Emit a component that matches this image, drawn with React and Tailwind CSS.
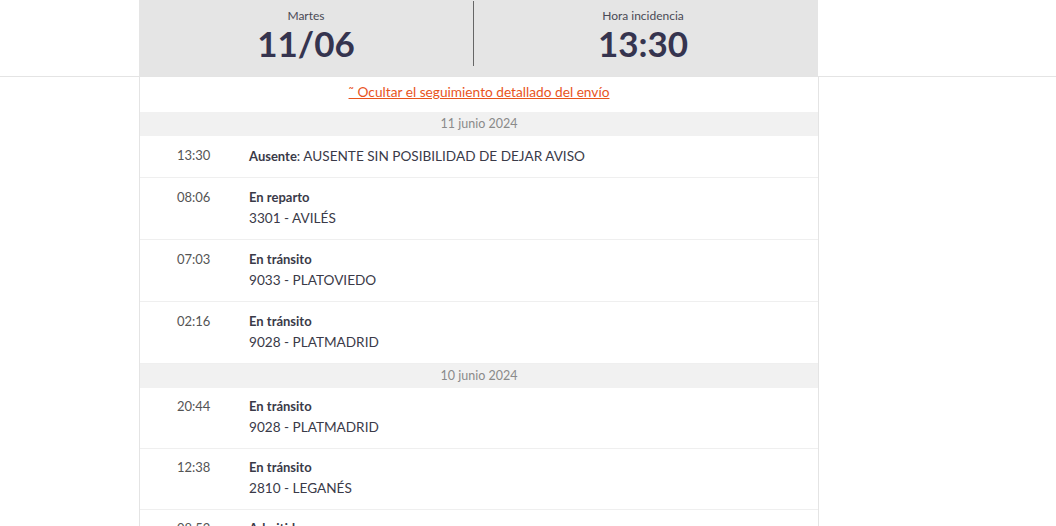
import React from 'react';

const days = [
  {
    date: '11 junio 2024',
    compact: false,
    events: [
      { time: '13:30', title: 'Ausente', detail: 'AUSENTE SIN POSIBILIDAD DE DEJAR AVISO', inline: true },
      { time: '08:06', title: 'En reparto', detail: '3301 - AVILÉS' },
      { time: '07:03', title: 'En tránsito', detail: '9033 - PLATOVIEDO' },
      { time: '02:16', title: 'En tránsito', detail: '9028 - PLATMADRID' },
    ],
  },
  {
    date: '10 junio 2024',
    compact: true,
    events: [
      { time: '20:44', title: 'En tránsito', detail: '9028 - PLATMADRID' },
      { time: '12:38', title: 'En tránsito', detail: '2810 - LEGANÉS' },
      { time: '08:52', title: 'Admitido', detail: '2810 - LEGANÉS' },
    ],
  },
];

function EventRow({ ev, compact }) {
  if (ev.inline) {
    return (
      <div className="flex h-[42px] items-center border-b border-[#efefef] pb-[1px] text-[13.6px] text-[#3a3a48]">
        <div className="w-[109px] pl-[37px] text-[13px] text-[#555]">{ev.time}</div>
        <div>
          <span className="text-[13px] font-bold">{ev.title}</span>: {ev.detail}
        </div>
      </div>
    );
  }
  return (
    <div
      className={
        compact
          ? 'flex h-[61px] border-b border-[#efefef] pt-[9px] text-[13.6px] text-[#3a3a48]'
          : 'flex h-[62px] border-b border-[#efefef] pt-[10px] text-[13.6px] text-[#3a3a48]'
      }
    >
      <div className="w-[109px] pl-[37px] text-[13px] leading-[18px] text-[#555]">{ev.time}</div>
      <div className="flex flex-col gap-[3px] leading-[18px]">
        <span className="text-[13px] font-bold">{ev.title}</span>
        <span>{ev.detail}</span>
      </div>
    </div>
  );
}

export default function App() {
  return (
    <div className="h-[526px] overflow-hidden bg-white" style={{ fontFamily: 'Lato, "Open Sans", sans-serif' }}>
      <div className="border-b border-[#e4e4e4]">
        <div className="ml-[139px] flex h-[76px] w-[679px] bg-[#e5e5e5]">
          <div className="flex w-[334px] flex-col items-center pt-[7px]">
            <span className="text-[12px] leading-[18px] text-[#4a4a55]">Martes</span>
            <span className="text-[35px] font-bold leading-[36px] text-[#35344f]">11/06</span>
          </div>
          <div className="mt-[1px] h-[65px] w-px bg-[#666]" />
          <div className="flex flex-1 flex-col items-center pt-[7px] pr-[6px]">
            <span className="text-[12px] leading-[18px] text-[#4a4a55]">Hora incidencia</span>
            <span className="text-[35px] font-bold leading-[36px] text-[#35344f]">13:30</span>
          </div>
        </div>
      </div>
      <div className="ml-[139px] w-[680px] border-x border-[#e4e4e4]">
        <div className="flex h-[35px] justify-center pt-[6px]">
          <a href="#" className="text-[13.7px] leading-[18px] text-[#e8541c] underline">
            ˜ Ocultar el seguimiento detallado del envío
          </a>
        </div>
        {days.map((d) => (
          <div key={d.date}>
            <div className="flex h-[24px] items-center justify-center bg-[#f1f1f1] text-[12.5px] text-[#8a8a8a]">
              {d.date}
            </div>
            {d.events.map((ev, i) => (
              <EventRow key={i} ev={ev} compact={d.compact} />
            ))}
          </div>
        ))}
      </div>
    </div>
  );
}
